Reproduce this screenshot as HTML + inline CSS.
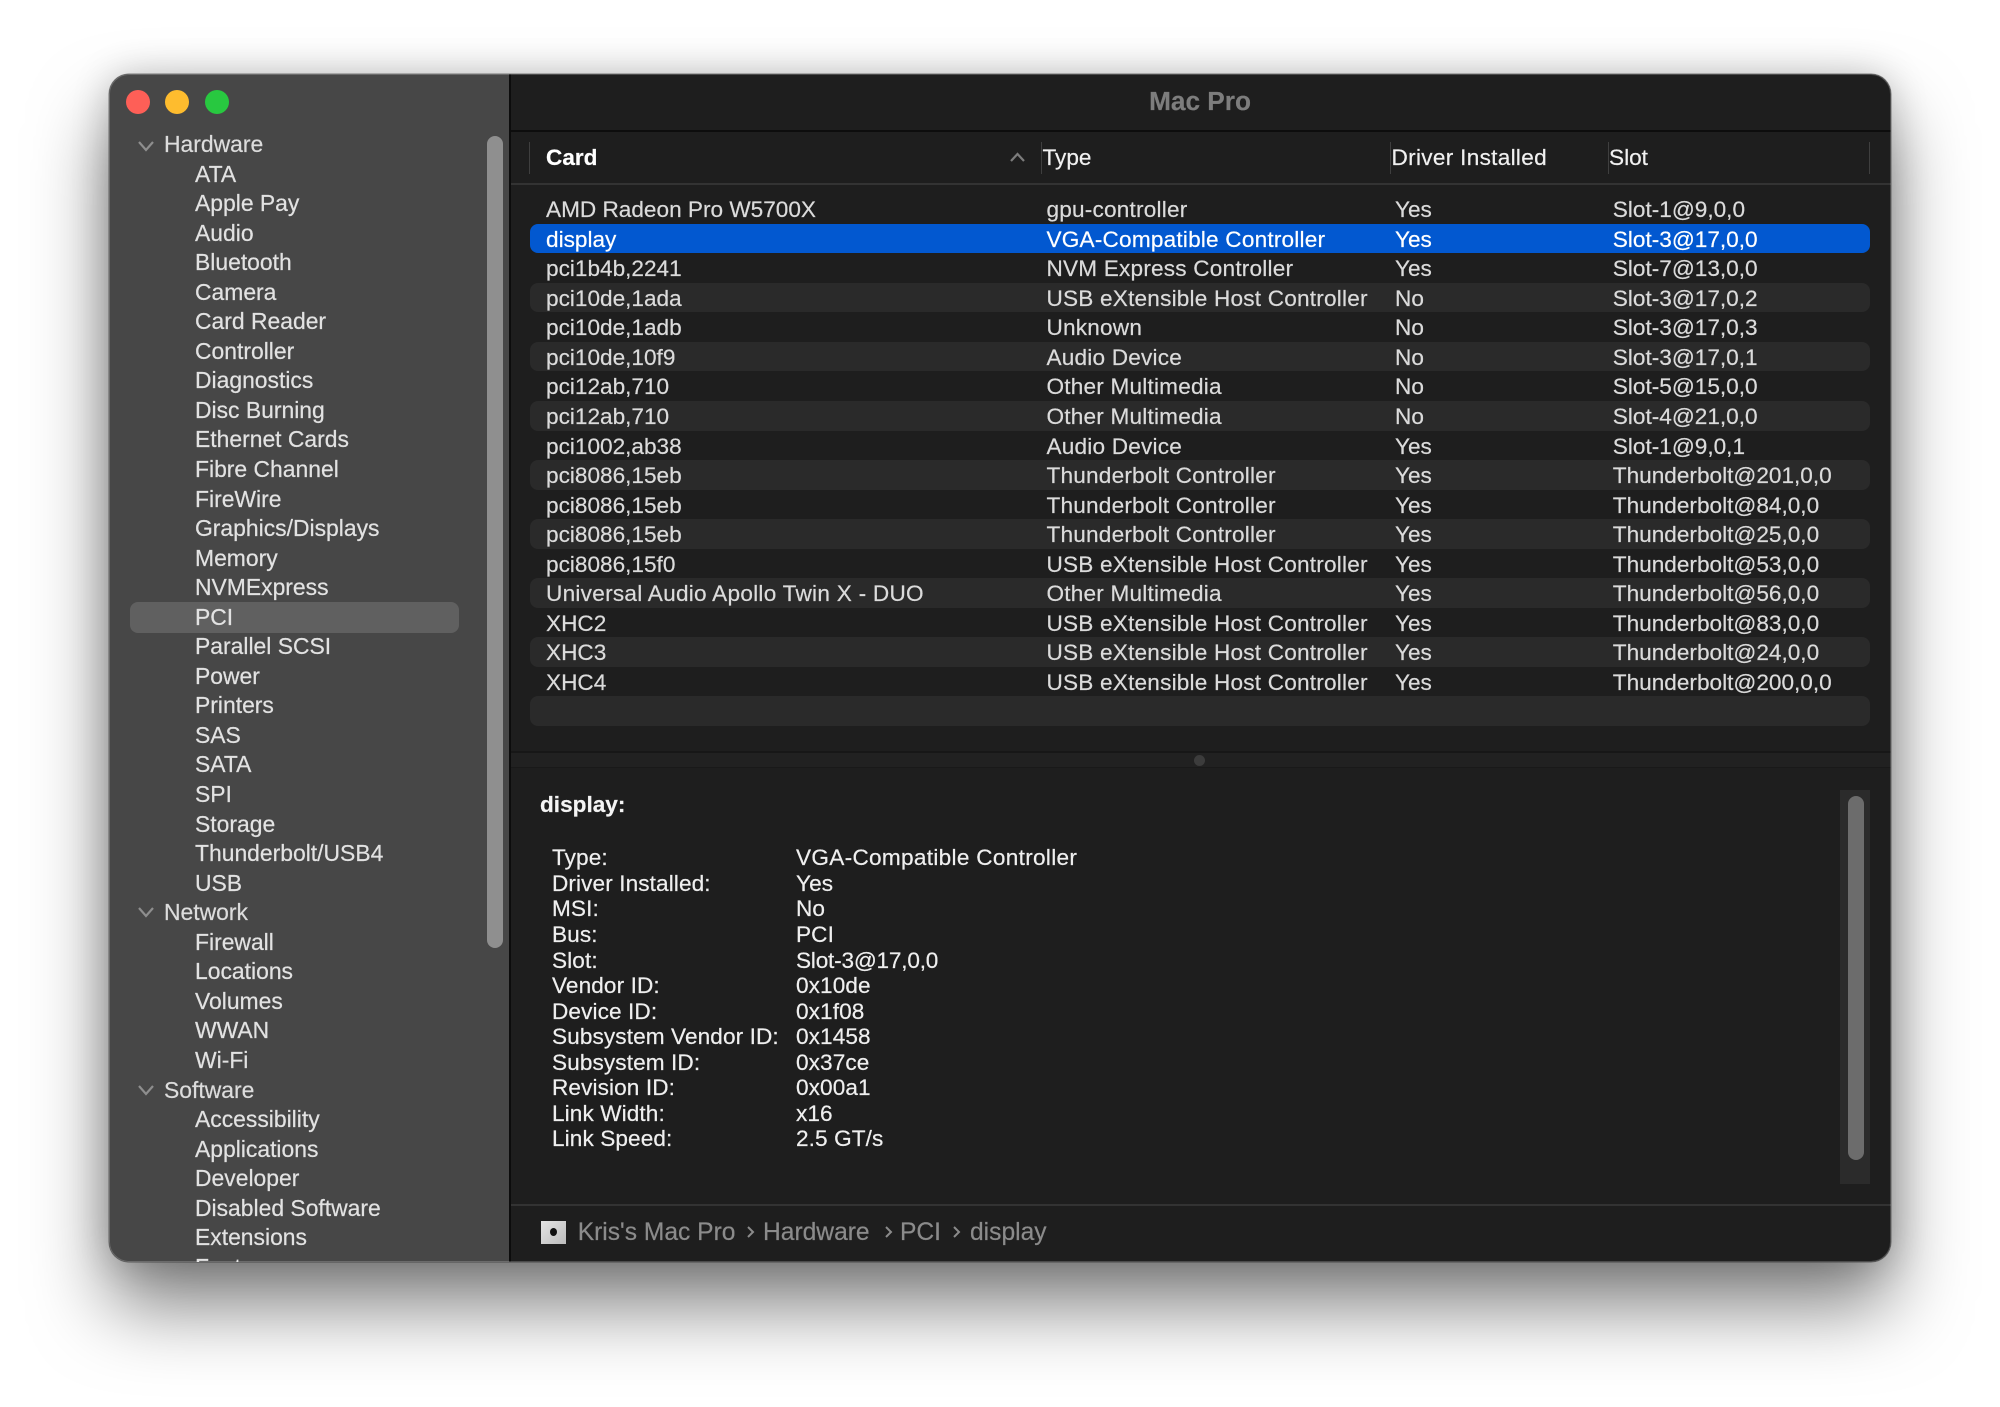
<!DOCTYPE html>
<html><head><meta charset="utf-8"><title>Mac Pro</title>
<style>
*{box-sizing:border-box;margin:0;padding:0}
html,body{width:2000px;height:1407px;background:#fff;overflow:hidden;font-family:"Liberation Sans",sans-serif}
#win{position:absolute;left:109px;top:74px;width:1782px;height:1188px;border-radius:20px;background:#1e1e1e;
 box-shadow:0 44px 76px rgba(0,0,0,.5),0 0 38px rgba(0,0,0,.2)}
#clip{position:absolute;left:0;top:0;width:1782px;height:1188px;border-radius:20px;overflow:hidden;filter:blur(.35px);-webkit-text-stroke:.2px}
#side{position:absolute;left:0;top:0;width:400px;height:1188px;background:#474747;overflow:hidden}
#edge{position:absolute;left:0;top:0;width:1782px;height:1188px;border-radius:20px;border:1px solid rgba(255,255,255,.2);box-shadow:0 0 0 .5px rgba(20,20,20,.5);pointer-events:none}
.abs{position:absolute}
.tl{position:absolute;top:16px;width:24px;height:24px;border-radius:50%}
#slist{position:absolute;left:0;top:56px;width:400px}
#slist div{height:29.56px;line-height:29.56px;font-size:22.9px;color:#e2e2e2;padding-left:86px;white-space:nowrap}
#slist div.h{padding-left:55px;color:#dcdcdc}
#rows{position:absolute;left:0;top:120.2px;width:1782px}
.r{position:relative;height:29.55px;line-height:32px;font-size:22.6px;color:#dbdbdb;white-space:nowrap}
.r:nth-child(even)::before{content:"";position:absolute;left:421px;width:1340px;top:0;height:29.55px;background:#2a2a2a;border-radius:8px}
.r.sel{color:#fff}
.r.sel::before{background:#0258d0 !important}
.r span{position:absolute;top:0}
.c1{left:437px}.c2{left:937.5px;letter-spacing:.2px}.c3{left:1286px}.c4{left:1503.8px}
.hd{position:absolute;top:64px;height:40px;line-height:40px;font-size:22.6px;color:#f0f0f0;white-space:nowrap}
.sp{position:absolute;top:68px;width:1px;height:32px;background:#3f3f3f}
#det{position:absolute;left:443px;top:771.3px;width:900px}
#det div{position:relative;height:25.57px;line-height:25.57px;font-size:22.6px;color:#efefef;white-space:nowrap;letter-spacing:.1px}
#det b{font-weight:normal;position:absolute;left:0}
#det i{font-style:normal;position:absolute;left:244px}
.bc{position:absolute;top:1141px;height:36px;line-height:36px;font-size:24.6px;color:#8b8b8b;white-space:nowrap}
</style></head><body>
<div id="win"><div id="clip">
 <div id="side">
  <div class="tl" style="left:17px;background:#fe5f57"></div>
  <div class="tl" style="left:56px;background:#febc2e"></div>
  <div class="tl" style="left:96px;background:#28c840"></div>
  <div class="abs" style="left:21px;top:528px;width:329px;height:31px;border-radius:8px;background:#606060"></div>
  <div class="abs" style="left:378px;top:62px;width:16px;height:812px;border-radius:8px;background:#8f8f8f"></div>
  <svg class="abs" style="left:28px;top:66px" width="18" height="14" viewBox="0 0 18 14"><path d="M2 2l7 8 7-8" fill="none" stroke="#8e8e8e" stroke-width="2.2"/></svg>
  <svg class="abs" style="left:28px;top:832px" width="18" height="14" viewBox="0 0 18 14"><path d="M2 2l7 8 7-8" fill="none" stroke="#8e8e8e" stroke-width="2.2"/></svg>
  <svg class="abs" style="left:28px;top:1010px" width="18" height="14" viewBox="0 0 18 14"><path d="M2 2l7 8 7-8" fill="none" stroke="#8e8e8e" stroke-width="2.2"/></svg>
  <div id="slist">
   <div class="h">Hardware</div><div>ATA</div><div>Apple Pay</div><div>Audio</div><div>Bluetooth</div><div>Camera</div><div>Card Reader</div><div>Controller</div><div>Diagnostics</div><div>Disc Burning</div><div>Ethernet Cards</div><div>Fibre Channel</div><div>FireWire</div><div>Graphics/Displays</div><div>Memory</div><div>NVMExpress</div><div>PCI</div><div>Parallel SCSI</div><div>Power</div><div>Printers</div><div>SAS</div><div>SATA</div><div>SPI</div><div>Storage</div><div>Thunderbolt/USB4</div><div>USB</div>
   <div class="h">Network</div><div>Firewall</div><div>Locations</div><div>Volumes</div><div>WWAN</div><div>Wi-Fi</div>
   <div class="h">Software</div><div>Accessibility</div><div>Applications</div><div>Developer</div><div>Disabled Software</div><div>Extensions</div><div>Fonts</div>
  </div>
 </div>
 <div class="abs" style="left:400px;top:0;width:2px;height:1188px;background:#0c0c0c"></div>

 <div class="abs" style="left:402px;top:7px;width:1380px;height:40px;line-height:40px;text-align:center;font-weight:bold;font-size:26.2px;color:#7d7d7d;padding-right:2px">Mac Pro</div>
 <div class="abs" style="left:402px;top:56px;width:1380px;height:2px;background:#0d0d0d"></div>

 <div class="sp" style="left:420px"></div><div class="sp" style="left:932px"></div><div class="sp" style="left:1281px"></div><div class="sp" style="left:1499px"></div><div class="sp" style="left:1760px"></div>
 <div class="hd" style="left:437px;font-weight:bold;color:#fff">Card</div>
 <div class="hd" style="left:933.5px">Type</div>
 <div class="hd" style="left:1282.5px;letter-spacing:.3px">Driver Installed</div>
 <div class="hd" style="left:1500px">Slot</div>
 <svg class="abs" style="left:900px;top:76px" width="17" height="14" viewBox="0 0 17 14"><path d="M2 11l6.500-7 6.500 7" fill="none" stroke="#7c7c7c" stroke-width="2.2"/></svg>
 <div class="abs" style="left:402px;top:109px;width:1380px;height:2px;background:#333"></div>

 <div id="rows">
  <div class="r"><span class="c1">AMD Radeon Pro W5700X</span><span class="c2">gpu-controller</span><span class="c3">Yes</span><span class="c4">Slot-1@9,0,0</span></div>
  <div class="r sel"><span class="c1">display</span><span class="c2">VGA-Compatible Controller</span><span class="c3">Yes</span><span class="c4">Slot-3@17,0,0</span></div>
  <div class="r"><span class="c1">pci1b4b,2241</span><span class="c2">NVM Express Controller</span><span class="c3">Yes</span><span class="c4">Slot-7@13,0,0</span></div>
  <div class="r"><span class="c1">pci10de,1ada</span><span class="c2">USB eXtensible Host Controller</span><span class="c3">No</span><span class="c4">Slot-3@17,0,2</span></div>
  <div class="r"><span class="c1">pci10de,1adb</span><span class="c2">Unknown</span><span class="c3">No</span><span class="c4">Slot-3@17,0,3</span></div>
  <div class="r"><span class="c1">pci10de,10f9</span><span class="c2">Audio Device</span><span class="c3">No</span><span class="c4">Slot-3@17,0,1</span></div>
  <div class="r"><span class="c1">pci12ab,710</span><span class="c2">Other Multimedia</span><span class="c3">No</span><span class="c4">Slot-5@15,0,0</span></div>
  <div class="r"><span class="c1">pci12ab,710</span><span class="c2">Other Multimedia</span><span class="c3">No</span><span class="c4">Slot-4@21,0,0</span></div>
  <div class="r"><span class="c1">pci1002,ab38</span><span class="c2">Audio Device</span><span class="c3">Yes</span><span class="c4">Slot-1@9,0,1</span></div>
  <div class="r"><span class="c1">pci8086,15eb</span><span class="c2">Thunderbolt Controller</span><span class="c3">Yes</span><span class="c4">Thunderbolt@201,0,0</span></div>
  <div class="r"><span class="c1">pci8086,15eb</span><span class="c2">Thunderbolt Controller</span><span class="c3">Yes</span><span class="c4">Thunderbolt@84,0,0</span></div>
  <div class="r"><span class="c1">pci8086,15eb</span><span class="c2">Thunderbolt Controller</span><span class="c3">Yes</span><span class="c4">Thunderbolt@25,0,0</span></div>
  <div class="r"><span class="c1">pci8086,15f0</span><span class="c2">USB eXtensible Host Controller</span><span class="c3">Yes</span><span class="c4">Thunderbolt@53,0,0</span></div>
  <div class="r"><span class="c1" style="letter-spacing:.26px">Universal Audio Apollo Twin X - DUO</span><span class="c2">Other Multimedia</span><span class="c3">Yes</span><span class="c4">Thunderbolt@56,0,0</span></div>
  <div class="r"><span class="c1">XHC2</span><span class="c2">USB eXtensible Host Controller</span><span class="c3">Yes</span><span class="c4">Thunderbolt@83,0,0</span></div>
  <div class="r"><span class="c1">XHC3</span><span class="c2">USB eXtensible Host Controller</span><span class="c3">Yes</span><span class="c4">Thunderbolt@24,0,0</span></div>
  <div class="r"><span class="c1">XHC4</span><span class="c2">USB eXtensible Host Controller</span><span class="c3">Yes</span><span class="c4">Thunderbolt@200,0,0</span></div>
  <div class="r"></div>
 </div>

 <div class="abs" style="left:402px;top:677px;width:1380px;height:17px;background:#212121;border-top:2px solid #171717;border-bottom:1px solid #191919"></div>
 <div class="abs" style="left:1085px;top:681px;width:11px;height:11px;border-radius:50%;background:#3c3c3c"></div>

 <div class="abs" style="left:431px;top:716px;height:30px;line-height:30px;font-size:22.6px;font-weight:bold;color:#f4f4f4">display:</div>
 <div id="det">
  <div><b>Type:</b><i style="letter-spacing:.3px">VGA-Compatible Controller</i></div>
  <div><b>Driver Installed:</b><i>Yes</i></div>
  <div><b>MSI:</b><i>No</i></div>
  <div><b>Bus:</b><i>PCI</i></div>
  <div><b>Slot:</b><i style="letter-spacing:-.2px">Slot-3@17,0,0</i></div>
  <div><b>Vendor ID:</b><i>0x10de</i></div>
  <div><b>Device ID:</b><i>0x1f08</i></div>
  <div><b>Subsystem Vendor ID:</b><i>0x1458</i></div>
  <div><b>Subsystem ID:</b><i>0x37ce</i></div>
  <div><b>Revision ID:</b><i>0x00a1</i></div>
  <div><b>Link Width:</b><i>x16</i></div>
  <div><b>Link Speed:</b><i>2.5 GT/s</i></div>
 </div>

 <div class="abs" style="left:1731px;top:716px;width:30px;height:394px;background:#2b2b2b"></div>
 <div class="abs" style="left:1739px;top:722px;width:16px;height:364px;border-radius:8px;background:#6c6c6c"></div>

 <div class="abs" style="left:402px;top:1130px;width:1380px;height:2px;background:#333"></div>
 <div class="abs" style="left:432px;top:1147px;width:25px;height:23px;background:linear-gradient(135deg,#e4e4e4,#bcbcbc)"></div>
 <div class="abs" style="left:441px;top:1154px;width:7px;height:8px;border-radius:50%;background:#111"></div>
 <div class="bc" style="left:468.700px">Kris's Mac Pro</div>
 <div class="bc" style="left:654px">Hardware</div>
 <div class="bc" style="left:791px">PCI</div>
 <div class="bc" style="left:861px">display</div>
 <svg class="abs" style="left:637px;top:1150px" width="10" height="16" viewBox="0 0 10 16"><path d="M2 3l5 5-5 5" fill="none" stroke="#8b8b8b" stroke-width="2"/></svg>
 <svg class="abs" style="left:775px;top:1150px" width="10" height="16" viewBox="0 0 10 16"><path d="M2 3l5 5-5 5" fill="none" stroke="#8b8b8b" stroke-width="2"/></svg>
 <svg class="abs" style="left:843px;top:1150px" width="10" height="16" viewBox="0 0 10 16"><path d="M2 3l5 5-5 5" fill="none" stroke="#8b8b8b" stroke-width="2"/></svg>
</div>
<div id="edge"></div>
</div>
</body></html>
